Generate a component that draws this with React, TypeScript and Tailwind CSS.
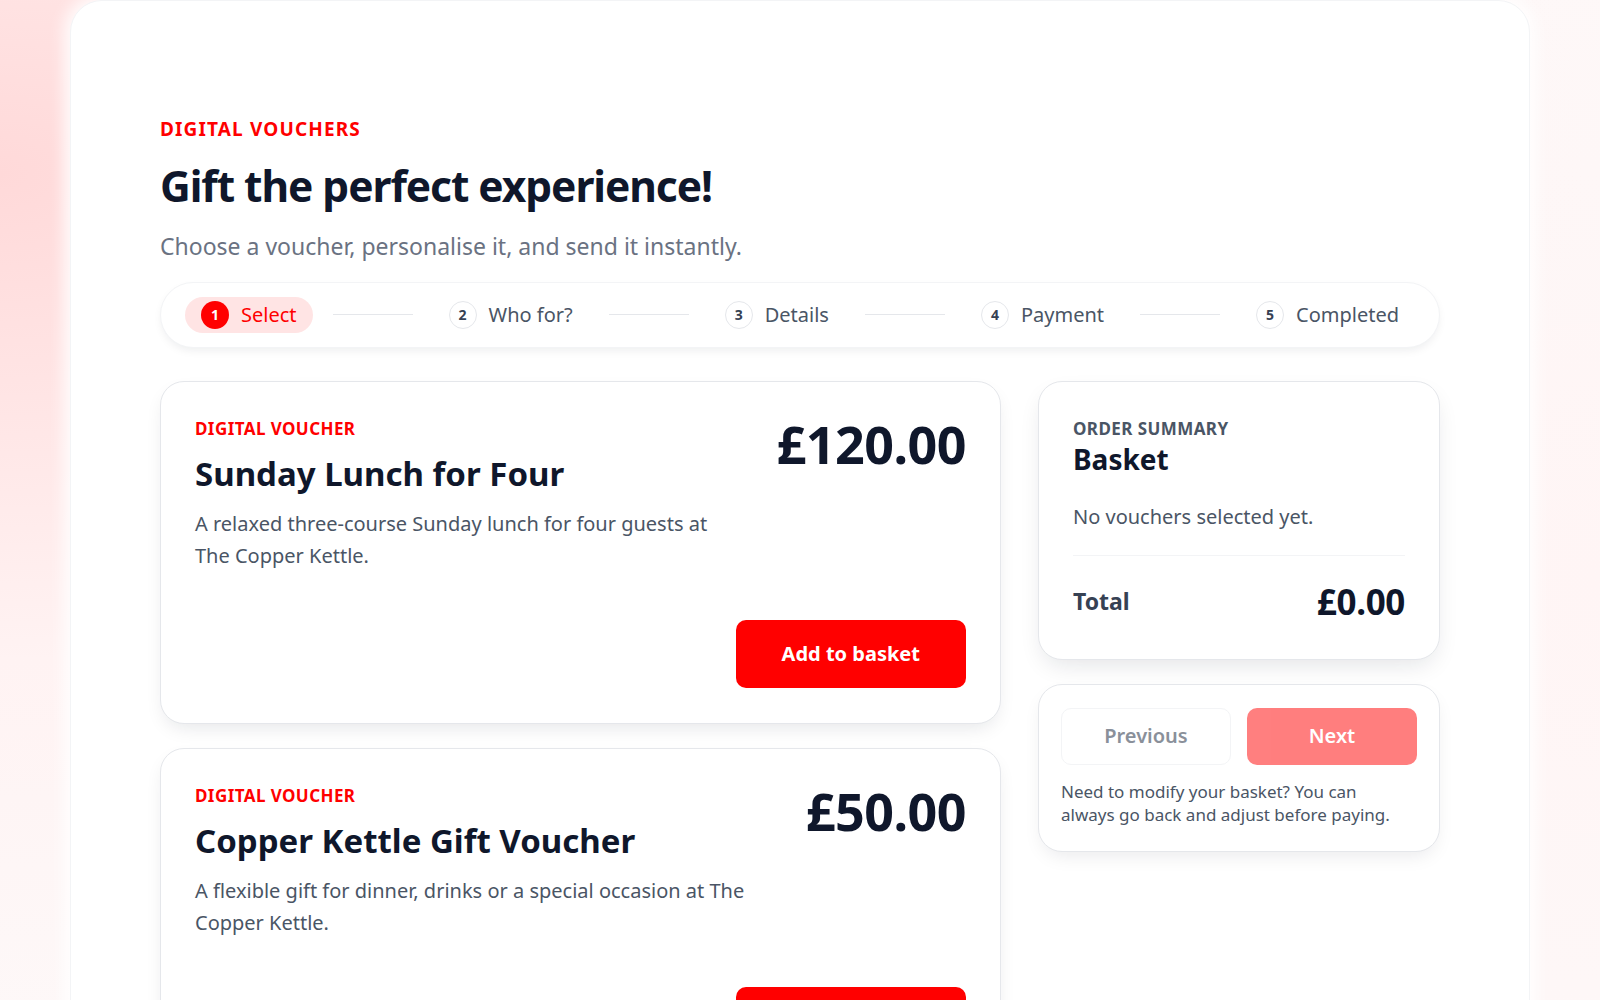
import React from "react";

const steps = [
  { n: 1, label: "Select" },
  { n: 2, label: "Who for?" },
  { n: 3, label: "Details" },
  { n: 4, label: "Payment" },
  { n: 5, label: "Completed" },
];

const vouchers = [
  {
    name: "Sunday Lunch for Four",
    price: "£120.00",
    text: "A relaxed three-course Sunday lunch for four guests at The Copper Kettle.",
  },
  {
    name: "Copper Kettle Gift Voucher",
    price: "£50.00",
    text: "A flexible gift for dinner, drinks or a special occasion at The Copper Kettle.",
  },
];

function Stepper() {
  return (
    <div className="mt-5 flex items-center gap-5 rounded-full border border-gray-100 bg-white px-6 py-[14px] shadow-[0_4px_10px_-2px_rgba(15,23,42,0.08)]">
      {steps.map((s, i) => (
        <React.Fragment key={s.n}>
          {i > 0 && <div className="h-px flex-1 bg-gray-200" />}
          {s.n === 1 ? (
            <div className="flex items-center gap-3 rounded-full bg-[#ffe4e4] px-4 py-1">
              <span className="flex h-7 w-7 items-center justify-center rounded-full bg-[#ff0000] text-sm font-bold text-white">
                {s.n}
              </span>
              <span className="text-xl leading-7 text-[#f00]">{s.label}</span>
            </div>
          ) : (
            <div className="flex items-center gap-3 px-4 py-1">
              <span className="flex h-7 w-7 items-center justify-center rounded-full border border-gray-200 bg-white text-sm font-bold text-gray-700">
                {s.n}
              </span>
              <span className="text-xl leading-7 text-gray-600">{s.label}</span>
            </div>
          )}
        </React.Fragment>
      ))}
    </div>
  );
}

function VoucherCard({ v }: { v: (typeof vouchers)[number] }) {
  return (
    <div className="rounded-3xl border border-gray-200 bg-white px-[34px] pt-[35px] pb-[35px] shadow-[0_8px_20px_-6px_rgba(15,23,42,0.12)]">
      <div className="flex items-start justify-between gap-10">
        <div className="min-w-0 flex-1">
          <p className="text-[17px] leading-6 font-bold tracking-wide text-[#f00] uppercase">Digital voucher</p>
          <h3 className="mt-[13px] text-[33px] leading-10 font-bold text-slate-900">{v.name}</h3>
          <p className="mt-[14px] text-xl leading-8 text-gray-600">{v.text}</p>
        </div>
        <div className="mt-[1px] text-[52px] leading-none font-bold tracking-[-0.01em] text-slate-900">{v.price}</div>
      </div>
      <div className="mt-[48px] flex justify-end">
        <button className="rounded-[10px] bg-[#ff0000] px-[46px] py-5 text-xl leading-7 font-bold text-white">
          Add to basket
        </button>
      </div>
    </div>
  );
}

export default function App() {
  return (
    <div className="min-h-screen bg-[radial-gradient(ellipse_at_0%_15%,#ffd9d9_0%,#fff3f3_35%,transparent_70%),radial-gradient(circle_at_100%_50%,#fff5f5,transparent_60%)] bg-[#fdfafa] font-['Noto_Sans',sans-serif]">
      <div className="mx-[70px] rounded-[32px] border border-gray-100 bg-white pt-[114px] pb-16 shadow-[0_0_16px_6px_rgba(255,255,255,0.9)]">
        <div className="mx-auto max-w-7xl">
          <p className="text-[19px] leading-7 font-bold tracking-[0.06em] text-[#f00] uppercase">Digital vouchers</p>
          <h1 className="mt-[22px] text-[42.5px] leading-none font-bold tracking-tight text-slate-900">
            Gift the perfect experience!
          </h1>
          <p className="mt-[22px] text-[23px] leading-8 text-gray-500">
            Choose a voucher, personalise it, and send it instantly.
          </p>

          <Stepper />

          <div className="mt-[33px] grid grid-cols-[minmax(0,1fr)_402px] items-start gap-[37px]">
            <div className="flex flex-col gap-6">
              {vouchers.map((v) => (
                <VoucherCard key={v.name} v={v} />
              ))}
            </div>

            <div className="flex flex-col gap-6">
              <div className="rounded-3xl border border-gray-200 bg-white px-[34px] pt-[35px] pb-10 shadow-[0_10px_24px_-6px_rgba(15,23,42,0.12)]">
                <p className="text-[17px] leading-6 font-bold tracking-wide text-gray-600 uppercase">Order summary</p>
                <h2 className="text-[28px] leading-9 font-bold text-slate-900">Basket</h2>
                <p className="mt-[26px] text-xl leading-7 text-gray-600">No vouchers selected yet.</p>
                <div className="mt-6 h-px bg-gray-100" />
                <div className="mt-7 flex items-center justify-between">
                  <span className="text-[23px] font-bold text-gray-700">Total</span>
                  <span className="text-[35px] leading-none font-bold tracking-[-0.01em] text-slate-900">£0.00</span>
                </div>
              </div>

              <div className="rounded-3xl border border-gray-200 bg-white px-[22px] pt-[23px] pb-[25px] shadow-[0_8px_20px_-6px_rgba(15,23,42,0.1)]">
                <div className="grid grid-cols-2 gap-4">
                  <button className="h-[57px] rounded-[10px] border border-gray-100 bg-white text-xl font-semibold text-[#8a909a]">
                    Previous
                  </button>
                  <button className="h-[57px] rounded-[10px] bg-[#ff0000] text-xl font-semibold text-white opacity-50">
                    Next
                  </button>
                </div>
                <p className="mt-[15px] max-w-[342px] text-[17px] leading-[23px] text-gray-600">
                  Need to modify your basket? You can always go back and adjust before paying.
                </p>
              </div>
            </div>
          </div>
        </div>
      </div>
    </div>
  );
}
